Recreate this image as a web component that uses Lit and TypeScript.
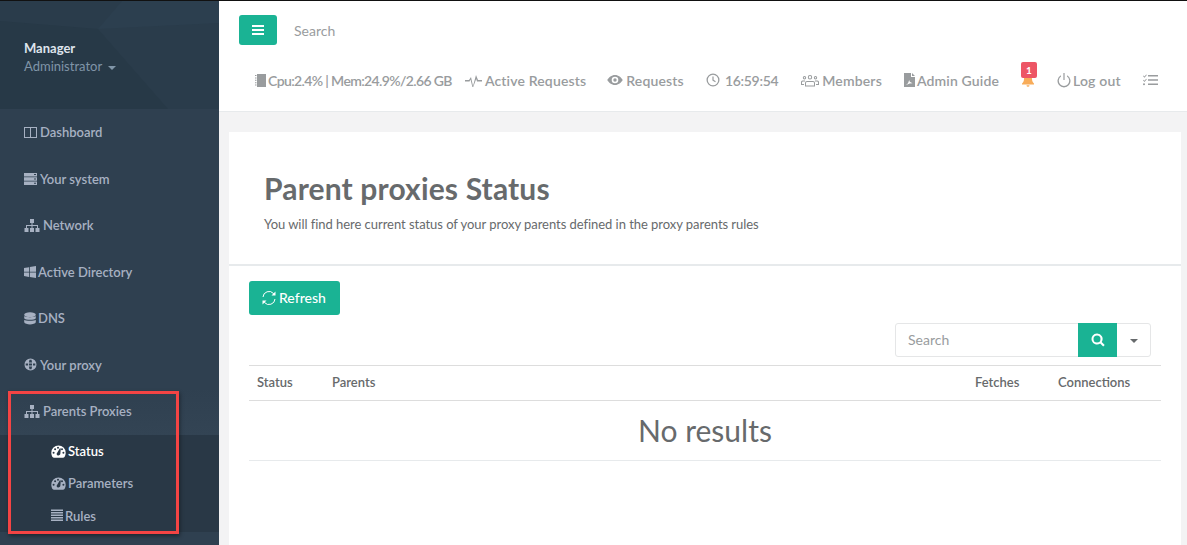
import { LitElement, html, css, svg } from 'lit'
import { customElement } from 'lit/decorators.js'

const icon = (w: number, h: number, body: unknown, cls = '') => html`<svg class="ico ${cls}" width=${w} height=${h} viewBox="0 0 ${w} ${h}" fill="currentColor">${body}</svg>`

const sitemap = () => icon(16, 13, svg`<path d="M6 0h4v4H8.500v2H14v3h1.500v4h-4V9H13V7H8.500v2H10v4H6V9h1.500V7H3v2h1.500v4h-4V9H2V6h5.500V4H6z"/>`)
const gauge = () => icon(15, 13, svg`<path fill-rule="evenodd" d="M7.500.500A7.200 7.200 0 0 0 .300 7.700c0 1.900.6 3.500 1.500 4.600.3.300.6.400 1 .4h9.400c.4 0 .7-.1 1-.4.900-1.100 1.500-2.700 1.500-4.600A7.200 7.200 0 0 0 7.500.500zM2.600 8.800a1 1 0 1 1 0-2 1 1 0 0 1 0 2zm1.500-3.500a1 1 0 1 1 0-2 1 1 0 0 1 0 2zM7 3.700a1 1 0 1 1 1-1 1 1 0 0 1-1 1zm1 6.600a1.600 1.600 0 0 1-2.400-1.500L8.900 3.300l.9.300-.5 5.400c.1.500-.7.900-1.300 1.300zM11 5.300a1 1 0 1 1 0-2 1 1 0 0 1 0 2zm1.400 3.500a1 1 0 1 1 0-2 1 1 0 0 1 0 2z"/>`, 'tight')
const bars = () => icon(12, 13, svg`<path d="M0 .5h12V2H0zM0 3h12v1.500H0zM0 5.500h12V7H0zM0 8h12v1.500H0zM0 10.500h12V12H0z"/>`, 'tight')

const navItems = [
  { label: 'Dashboard', ico: () => icon(13, 11, svg`<path fill-rule="evenodd" d="M0 0h13v11H0zM1 1v9h5V1zm6 0v9h5V1z"/>`) },
  { label: 'Your system', ico: () => icon(13, 12, svg`<path fill-rule="evenodd" d="M0 0h13v3.400H0zM0 4.300h13v3.400H0zM0 8.600h13V12H0zM10 1v1h2V1zM10 5.500v1h2v-1zM10 9.800v1h2v-1z"/>`) },
  { label: 'Network', ico: sitemap },
  { label: 'Active Directory', ico: () => icon(12, 12, svg`<path d="M0 2l5-.8v4.500H0zM5.800 1L12 0v5.700H5.800zM0 6.500h5v4.400L0 10zM5.800 6.500H12V12l-6.200-1z"/>`, 'tight') },
  { label: 'DNS', ico: () => icon(12, 13, svg`<ellipse cx="6" cy="2.700" rx="5.800" ry="2.400"/><path d="M.2 4c1 1.500 10.600 1.500 11.600 0v2.300c-1 2-10.600 2-11.600 0zM.2 7.700c1 1.500 10.600 1.500 11.600 0v2.600c-1 2.800-10.600 2.800-11.600 0z"/>`, 'tight') },
  { label: 'Your proxy', ico: () => icon(13, 13, svg`<path fill-rule="evenodd" d="M6.500.5a6 6 0 1 0 0 12 6 6 0 0 0 0-12zM5.500 1.800h2l.6 2.800H4.900zM1.700 5.500h2.400v2H1.700zM5 5.500h3v2H5zM9 5.500h2.300v2H9zM4.900 8.400h3.200l-.6 2.800h-2z"/>`) }
]

@customElement('app-root')
export class AppRoot extends LitElement {
  static styles = css`
    :host {
      display: block;
      height: 545px;
      overflow: hidden;
      font-family: Lato, "Liberation Sans", sans-serif;
      font-size: 13px;
      color: #676a6c;
      background: #f3f3f4;
    }
    .page {
      display: grid;
      grid-template-columns: 219px 1fr;
      height: 544px;
      border-top: 1px solid #111;
    }
    .sidebar {
      position: relative;
      background: #2f4050;
      overflow: hidden;
    }
    .profile {
      position: relative;
      height: 108px;
      box-sizing: border-box;
      padding: 39px 24px 0;
      background: #2a3c4b;
    }
    .profile svg {
      position: absolute;
      left: 0;
      top: 0;
    }
    .profile div {
      position: relative;
    }
    .who {
      color: #dfe4ed;
      font-weight: 700;
      line-height: 17px;
    }
    .role {
      color: #8095a8;
      line-height: 19px;
      display: flex;
      align-items: center;
      gap: 6px;
    }
    .caret {
      width: 0;
      height: 0;
      border-left: 4px solid transparent;
      border-right: 4px solid transparent;
      border-top: 4px solid currentColor;
      margin-top: 2px;
    }
    .tight {
      margin-right: -1px;
    }
    .nav-list {
      margin-top: -0.25px;
    }
    .nav-item {
      display: flex;
      align-items: center;
      gap: 3px;
      height: 46.5px;
      padding-left: 24px;
      color: #a7b1c2;
      font-weight: 600;
    }
    .nav-item.open {
      height: 47.25px;
      background: linear-gradient(#2f4050, #334454);
    }
    .sub {
      background: #293846;
    }
    .sub-item {
      display: flex;
      align-items: center;
      gap: 3px;
      height: 32.3px;
      padding-left: 51px;
      color: #a7b1c2;
      font-weight: 600;
    }
    .sub-item.on {
      color: #fff;
    }
    .mark {
      position: absolute;
      left: 8px;
      top: 390px;
      width: 165px;
      height: 137px;
      border: 3px solid #f44444;
      box-shadow: 1px 2px 4px rgba(0, 0, 0, 0.4);
    }
    .main {
      min-width: 0;
      display: flex;
      flex-direction: column;
    }
    .top {
      height: 111px;
      flex: none;
      box-sizing: border-box;
      background: #fff;
      border-bottom: 1px solid #e7eaec;
      padding: 14px 0 0 20px;
    }
    .top-row {
      display: flex;
      align-items: center;
      gap: 17px;
    }
    .menu-btn {
      width: 38px;
      height: 30px;
      background: #1ab394;
      border-radius: 3px;
      color: #fff;
      display: flex;
      align-items: center;
      justify-content: center;
    }
    .top-search {
      color: #999c9e;
      font-size: 14px;
      padding-top: 1px;
    }
    .links {
      display: flex;
      align-items: center;
      margin: 20px 0 0 16px;
      height: 30px;
      color: #999c9e;
      font-weight: 600;
      font-size: 14px;
      letter-spacing: 0.15px;
      white-space: nowrap;
    }
    .links > span {
      display: flex;
      align-items: center;
      gap: 3px;
      margin-right: 22px;
    }
    .links .cpu {
      margin-right: 13px;
      gap: 0;
      letter-spacing: -0.63px;
    }
    .links .active {
      margin-right: 21px;
    }
    .links .time {
      gap: 5px;
      margin-right: 23px;
      letter-spacing: -0.3px;
    }
    .links .close {
      gap: 2px;
    }
    .bell {
      position: relative;
      color: #f8ac59;
    }
    .badge {
      position: absolute;
      left: 0;
      top: -11px;
      width: 16px;
      height: 16px;
      border-radius: 2px;
      background: #ed5565;
      color: #fff;
      font-size: 10px;
      font-style: normal;
      font-weight: 700;
      line-height: 16px;
      text-align: center;
    }
    .card {
      flex: 1;
      margin: 20px 6px 0 10px;
      background: #fff;
    }
    .head {
      height: 134px;
      box-sizing: border-box;
      padding: 38px 35px 0;
      border-bottom: 2px solid #e7eaec;
    }
    h1 {
      margin: 0;
      font-size: 30px;
      font-weight: 700;
      line-height: 36px;
      letter-spacing: 0.15px;
    }
    .head p {
      margin: 9px 0 0;
      line-height: 18px;
      letter-spacing: -0.045px;
    }
    .body {
      padding: 15px 20px;
    }
    .refresh {
      display: inline-flex;
      align-items: center;
      gap: 2px;
      height: 34px;
      padding: 0 14px 1px 12px;
      box-sizing: border-box;
      border-radius: 3px;
      background: #1ab394;
      color: #fff;
      font-size: 14px;
      font-weight: 500;
    }
    .search-row {
      display: flex;
      justify-content: flex-end;
      margin: 8px 10px 8px 0;
    }
    .search-box {
      display: flex;
      width: 256px;
      height: 34px;
      box-sizing: border-box;
      border: 1px solid #e5e6e7;
      border-radius: 3px;
    }
    .search-box .ph {
      flex: 1;
      padding-left: 12px;
      color: #999c9e;
      line-height: 32px;
      font-size: 14px;
    }
    .search-go {
      width: 39px;
      margin: -1px 0;
      background: #1ab394;
      color: #fff;
      display: flex;
      align-items: center;
      justify-content: center;
    }
    .search-more {
      width: 33px;
      color: #676a6c;
      display: flex;
      align-items: center;
      justify-content: center;
    }
    .thead {
      display: grid;
      grid-template-columns: 75px 1fr 83px 111px;
      height: 34px;
      align-items: start;
      line-height: 33px;
      border-top: 1px solid #ddd;
      border-bottom: 1px solid #ddd;
      font-weight: 600;
    }
    .thead span {
      padding-left: 8px;
    }
    .empty {
      height: 59px;
      border-bottom: 1px solid #e7eaec;
      text-align: center;
      font-size: 30px;
      line-height: 58px;
    }
  `

  render () {
    return html`
      <div class="page">
        <aside class="sidebar">
          <div class="profile">
            <svg width="219" height="108" viewBox="0 0 219 108">
              <polygon points="98,28 122,0 219,0 219,22" fill="#2c3f4f"/>
              <polygon points="0,20 98,28 168,108 0,108" fill="#273947"/>
            </svg>
            <div class="who">Manager</div>
            <div class="role">Administrator <i class="caret"></i></div>
          </div>
          <div class="nav-list">
            ${navItems.map((n) => html`<div class="nav-item">${n.ico()}<span>${n.label}</span></div>`)}
            <div class="nav-item open">${sitemap()}<span>Parents Proxies</span></div>
          </div>
          <div class="sub">
            <div class="sub-item on">${gauge()}<span>Status</span></div>
            <div class="sub-item">${gauge()}<span>Parameters</span></div>
            <div class="sub-item">${bars()}<span>Rules</span></div>
          </div>
          <div class="mark"></div>
        </aside>
        <main class="main">
          <header class="top">
            <div class="top-row">
              <div class="menu-btn">${icon(12, 10, svg`<path d="M0 0h12v2H0zM0 4h12v2H0zM0 8h12v2H0z"/>`)}</div>
              <div class="top-search">Search</div>
            </div>
            <div class="links">
              <span class="cpu">${icon(13, 13, svg`<path d="M2 0h9v13H2zM0 1h1.500v1H0zM0 3.400h1.500v1H0zM0 5.800h1.500v1H0zM0 8.200h1.500v1H0zM0 10.600h1.500v1H0z"/>`)}Cpu:2.4% | Mem:24.9%/2.66 GB</span>
              <span class="active">${icon(17, 13, svg`<path d="M0 6h4l2-3 2 9 3-11 2 5h4v1.500h-5L11.200 5 8.200 13h-.8L5.500 5.500 4.500 7.500H0z"/>`)}Active Requests</span>
              <span>${icon(16, 12, svg`<path fill-rule="evenodd" d="M8 1C4.500 1 1.700 3.500.300 6c1.400 2.500 4.200 5 7.700 5s6.300-2.500 7.700-5C14.300 3.500 11.500 1 8 1zm0 8.300a3.300 3.300 0 1 1 0-6.600 3.300 3.300 0 0 1 0 6.600zM8 4.300a1.700 1.700 0 1 0 0 3.400 1.700 1.700 0 0 0 0-3.400z"/>`)}Requests</span>
              <span class="time">${icon(14, 14, svg`<path fill-rule="evenodd" d="M7 .5a6.500 6.500 0 1 0 0 13 6.500 6.500 0 0 0 0-13zm0 1.300a5.200 5.200 0 1 1 0 10.400A5.200 5.200 0 0 1 7 1.800zM6.400 3.500h1.200v3.300l2.200 1.400-.6 1L6.400 7.500z"/>`)}16:59:54</span>
              <span>${icon(18, 13, svg`<path fill-rule="evenodd" d="M9 1a2.200 2.200 0 1 0 0 4.400A2.200 2.200 0 0 0 9 1zm0 1a1.200 1.200 0 1 1 0 2.400A1.200 1.200 0 0 1 9 2zM3.500 2a1.700 1.700 0 1 0 0 3.400 1.700 1.700 0 0 0 0-3.400zm0 1a.7.7 0 1 1 0 1.400.7.7 0 0 1 0-1.400zM14.500 2a1.700 1.700 0 1 0 0 3.400 1.700 1.700 0 0 0 0-3.400zm0 1a.7.7 0 1 1 0 1.400.7.7 0 0 1 0-1.400zM6 7h6a2 2 0 0 1 2 2v3.500H4V9a2 2 0 0 1 2-2zm0 1a1 1 0 0 0-1 1v2.500h8V9a1 1 0 0 0-1-1zM1.500 6.500H4v1H2a1 1 0 0 0-1 1V10h2v1H0V8a1.500 1.500 0 0 1 1.500-1.500zM14 6.500h2.500A1.500 1.500 0 0 1 18 8v3h-3v-1h2V8.500a1 1 0 0 0-1-1h-2z"/>`)}Members</span>
              <span class="close">${icon(11, 14, svg`<path fill-rule="evenodd" d="M0 0h7v4h4v10H0zM8 0l3 3H8zM2 12l2-1.800 1.200-3.200.6 1.800 2.700 1.500-2.700.2z"/>`)}Admin Guide</span>
              <span class="bell">
                ${icon(14, 14, svg`<path d="M7 1a1 1 0 0 1 1 1c2.200.4 3 2 3 4 0 2.500 1 3.500 2 4.500v1H1v-1c1-1 2-2 2-4.500 0-2 .8-3.600 3-4a1 1 0 0 1 1-1zM5.500 12.300h3a1.500 1.500 0 0 1-3 0z"/>`)}
                <i class="badge">1</i>
              </span>
              <span class="close">${icon(14, 15, svg`<path fill-rule="evenodd" d="M6.400 0h1.200v7H6.400zM4 2.200v1.300a5.200 5.200 0 1 0 6 0V2.200a6.500 6.500 0 1 1-6 0z"/>`)}Log out</span>
              <span>${icon(15, 12, svg`<path d="M5 1h10v1.400H5zM5 5.300h10v1.400H5zM5 9.600h10V11H5zM.500 1.500l1 1L3.200 .5l.6.500L1.500 3.700 0 2zM.500 5.800l1 1 1.700-2 .6.500L1.500 8 0 6.300zM1 9.200a1 1 0 1 1 0 2 1 1 0 0 1 0-2z"/>`)}</span>
            </div>
          </header>
          <section class="card">
            <div class="head">
              <h1>Parent proxies Status</h1>
              <p>You will find here current status of your proxy parents defined in the proxy parents rules</p>
            </div>
            <div class="body">
              <div class="refresh">${icon(16, 16, svg`<g fill="none" stroke="currentColor" stroke-width="1"><path d="M2 7a6 6 0 0 1 10.500-3.500L14 5M14 9a6 6 0 0 1-10.500 3.500L2 11"/></g><path d="M14.500 1.500v4h-4zM1.500 14.500v-4h4z"/>`)}Refresh</div>
              <div class="search-row">
                <div class="search-box">
                  <div class="ph">Search</div>
                  <div class="search-go">${icon(14, 14, svg`<path fill-rule="evenodd" d="M6 .5a5.500 5.500 0 1 0 3.200 10l3 3 1.500-1.500-3-3A5.500 5.500 0 0 0 6 .5zm0 2a3.500 3.500 0 1 1 0 7 3.500 3.500 0 0 1 0-7z"/>`)}</div>
                  <div class="search-more"><i class="caret"></i></div>
                </div>
              </div>
              <div class="thead">
                <span>Status</span><span>Parents</span><span>Fetches</span><span>Connections</span>
              </div>
              <div class="empty">No results</div>
            </div>
          </section>
        </main>
      </div>
    `
  }
}
